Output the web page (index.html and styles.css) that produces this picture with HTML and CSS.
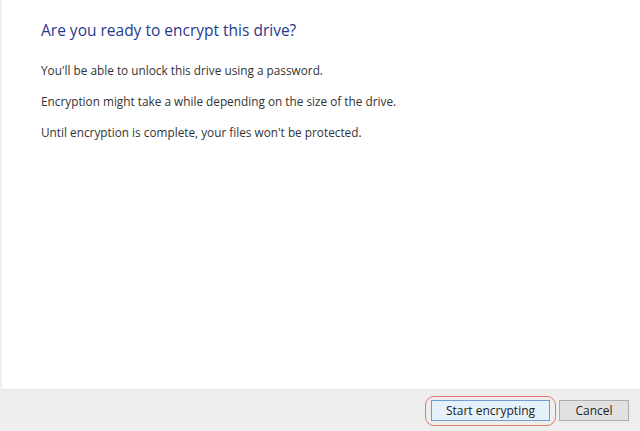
FILE: index.html
```html
<!DOCTYPE html>
<html lang="en">
<head>
    <meta charset="utf-8">
    <title>BitLocker Drive Encryption</title>
    <link rel="stylesheet" href="styles.css">
</head>
<body class="wizard">
    <div class="wizard-body">
        <h1 class="wizard-title">Are you ready to encrypt this drive?</h1>
        <p>You'll be able to unlock this drive using a password.</p>
        <p>Encryption might take a while depending on the size of the drive.</p>
        <p>Until encryption is complete, your files won't be protected.</p>
    </div>

    <div class="wizard-footer">
        <span class="highlight">
            <button class="btn btn-default">Start encrypting</button>
        </span>
        <button class="btn">Cancel</button>
    </div>
</body>
</html>
```

FILE: styles.css
```css
html, body {
    height: 100%;
}

.wizard {
    margin: 0;
    display: flex;
    flex-direction: column;
    background-color: #ffffff;
    border-left: 2px solid #f0f0f0;
    font-family: "Open Sans", "Noto Sans", sans-serif;
    font-size: 11.8px;
    color: #333333;
}

.wizard-body {
    flex: 1;
    padding: 19px 0 0 39px;
}

.wizard-title {
    margin: 0 0 21px 0;
    font-size: 15.5px;
    font-weight: normal;
    color: #1f3a8f;
}

.wizard-body p {
    margin: 0 0 14px 0;
    line-height: 17px;
}

.wizard-footer {
    height: 41px;
    display: flex;
    align-items: center;
    justify-content: flex-end;
    gap: 3px;
    padding-right: 11px;
    background-color: #eeeeee;
    border-top: 1px solid #e6e6e6;
}

.highlight {
    display: flex;
    padding: 3.5px 5px;
    border: 1.5px solid #e07a6a;
    border-radius: 9px;
}

.btn {
    height: 21px;
    width: 70px;
    padding: 0;
    white-space: nowrap;
    font-family: inherit;
    font-size: 12px;
    color: #222222;
    background-color: #e1e1e1;
    border: 1px solid #adadad;
}

.btn-default {
    width: 119px;
    background-color: #e5f1fb;
    border-color: #6f9fd0;
}
```
